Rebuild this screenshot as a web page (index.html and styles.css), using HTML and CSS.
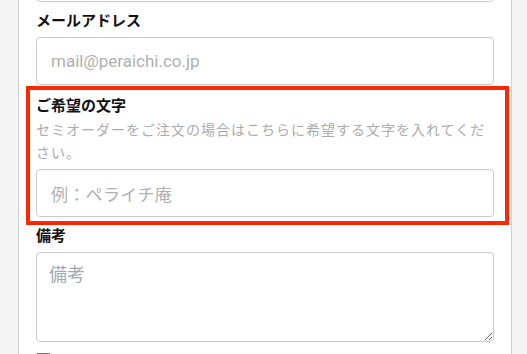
FILE: index.html
```html
<!DOCTYPE html>
<html lang="ja">

<head>
    <meta charset="UTF-8">
    <meta name="viewport" content="width=device-width, initial-scale=1.0">
    <title>ご注文フォーム</title>
    <link rel="stylesheet" href="styles.css">
</head>

<body>
    <div class="panel">
        <input type="text" class="input" placeholder="">

        <div class="field field-first">
            <label class="label">メールアドレス</label>
            <input type="email" class="input input-latin" placeholder="mail@peraichi.co.jp">
        </div>

        <div class="field field-marked">
            <label class="label">ご希望の文字</label>
            <p class="hint">セミオーダーをご注文の場合はこちらに希望する文字を入れてください。</p>
            <input type="text" class="input input-ja" placeholder="例：ペライチ庵">
        </div>

        <div class="field field-last">
            <label class="label">備考</label>
            <textarea class="textarea" placeholder="備考"></textarea>
        </div>

        <div class="agree">
            <span class="check"></span>
            <span class="agree-text">個人情報の取り扱いに同意する</span>
        </div>
    </div>
</body>

</html>
```

FILE: styles.css
```css
body {
    margin: 0;
    background-color: #f4f4f4;
    font-family: Roboto, "Noto Sans CJK JP", sans-serif;
    color: #111;
}

.panel {
    width: 494px;
    margin: -46px 0 0 18px;
    padding: 0 17px 40px;
    box-sizing: border-box;
    background: white;
    border-left: 1px solid #d2d2d2;
    border-right: 1px solid #d2d2d2;
}

.field {
    display: flex;
    flex-direction: column;
}

.field-first {
    margin-top: 7px;
}

.field-marked {
    margin: 1px -15px 0 -10px;
    padding: 4px 11px 4px 6px;
    border: 4px solid #ff2600;
}

.field-last {
    margin-top: -1px;
}

.label {
    font-family: "Noto Sans CJK JP", sans-serif;
    font-size: 15px;
    font-weight: bold;
    line-height: 22px;
    margin-bottom: 6px;
}

.field-marked .label {
    margin-bottom: 0;
}

.hint {
    margin: 2px 0 5px;
    font-family: "Noto Sans CJK JP", sans-serif;
    font-size: 14px;
    letter-spacing: 1px;
    line-height: 23px;
    color: #ababab;
}

.input,
.textarea {
    display: block;
    width: 100%;
    box-sizing: border-box;
    border: 1px solid #cccccc;
    border-radius: 4px;
    background: white;
    padding: 0 14px;
    outline: none;
}

.input {
    height: 48px;
    font-family: "Noto Sans CJK JP", sans-serif;
    font-size: 17px;
    letter-spacing: 0.3px;
}

.input-latin {
    font-family: Roboto, sans-serif;
    font-size: 17px;
    letter-spacing: 0;
}

.input::placeholder {
    color: #b0b0b0;
}

.textarea {
    height: 90px;
    padding: 7px 12px;
    font-family: "Noto Sans CJK JP", sans-serif;
    font-size: 18px;
    resize: vertical;
}

.textarea::placeholder {
    color: #a3a8b4;
}

.agree {
    display: flex;
    align-items: flex-start;
    gap: 10px;
    margin-top: 11px;
}

.check {
    width: 13px;
    height: 13px;
    border: 1px solid #777;
    border-radius: 2px;
    background: #888;
}

.agree-text {
    font-size: 14px;
    line-height: 16px;
    color: #333;
}
```
